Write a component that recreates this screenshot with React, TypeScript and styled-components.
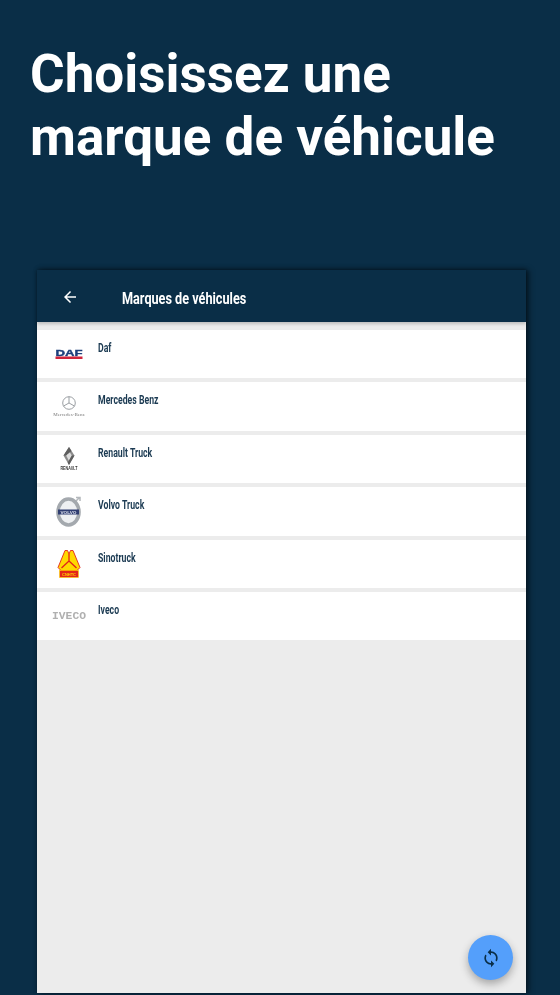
import React from "react"
import styled, { createGlobalStyle } from "styled-components"

const GlobalStyle = createGlobalStyle`
html, body { margin: 0; padding: 0; background: #0a2e47; }
* { box-sizing: border-box; }
`

const Page = styled.div`
width: 560px;
height: 995px;
overflow: hidden;
background: #0a2e47;
padding: 43px 0 2px 37px;
display: flex;
flex-direction: column;
`

const Title = styled.h1`
margin: 0 0 101px -7px;
font-family: Roboto, "Liberation Sans", sans-serif;
font-weight: 700;
font-size: 53px;
line-height: 63px;
color: #ffffff;
`

const Frame = styled.div`
position: relative;
width: 489px;
flex: 1;
display: flex;
flex-direction: column;
background: #ececec;
box-shadow: 3px 0 6px rgba(0, 0, 0, 0.45), 0 -1px 4px rgba(0, 0, 0, 0.3);
`

const Toolbar = styled.div`
height: 52px;
flex-shrink: 0;
display: flex;
align-items: center;
background: #0a2e47;
box-shadow: 0 2px 3px rgba(0, 0, 0, 0.2);
padding-left: 24px;
`

const BackButton = styled.div`
width: 18px;
height: 18px;
margin-right: 43px;
margin-top: 1px;
display: flex;
color: #ffffff;
`

// the app uses a condensed face, none is installed so Roboto gets squeezed
const ToolbarTitle = styled.div`
font-family: Roboto, sans-serif;
font-weight: 700;
font-size: 17px;
color: #ffffff;
margin-top: 3px;
white-space: nowrap;
transform: scaleX(0.745);
transform-origin: left center;
`

const List = styled.div`
display: flex;
flex-direction: column;
gap: 4px;
padding-top: 8px;
`

const Row = styled.div`
height: 48.4px;
background: #ffffff;
display: flex;
`

const LogoSlot = styled.div`
width: 61px;
flex-shrink: 0;
display: flex;
align-items: center;
justify-content: center;
padding-left: 3px;
filter: blur(0.35px);
`

const Name = styled.div`
font-family: Roboto, sans-serif;
font-weight: 700;
font-size: 13px;
color: #1b3a52;
padding-top: 10px;
white-space: nowrap;
transform: scaleX(0.67);
transform-origin: left center;
`

const Fab = styled.div`
position: absolute;
right: 13px;
bottom: 13px;
width: 45px;
height: 45px;
border-radius: 50%;
background: #549ffb;
color: #0a2e47;
display: flex;
align-items: center;
justify-content: center;
box-shadow: 0 4px 8px rgba(0, 0, 0, 0.3);
`

const DafLogo = () => (
  <svg width="32" height="16" viewBox="0 0 32 16">
    <text x="16" y="9.500" textAnchor="middle" fontFamily="Liberation Sans" fontWeight="700" fontSize="9.500" fill="#1c3f7c" stroke="#1c3f7c" strokeWidth="0.400" textLength="27" lengthAdjust="spacingAndGlyphs">DAF</text>
    <rect x="2.500" y="10.500" width="27" height="2.500" fill="#d0243c" />
  </svg>
)

const MercedesLogo = () => (
  <svg width="44" height="32" viewBox="-6 0 44 32">
    <g stroke="#8f9498" fill="none" strokeWidth="0.900">
      <circle cx="16" cy="12" r="6.300" />
      <path d="M16 5.700V12L10.600 15M16 12l5.400 3" />
    </g>
    <text x="16" y="25" textAnchor="middle" fontFamily="Liberation Serif" fontSize="5" fill="#777">Mercedes-Benz</text>
  </svg>
)

const RenaultLogo = () => (
  <svg width="26" height="30" viewBox="-3 -3 26 30">
    <path d="M10 0l5.500 8.500L10 18 4.500 8.500z" fill="#8b8b8b" />
    <path d="M10 4l2.800 4.500L10 14 7.200 8.500z" fill="#dcdcdc" />
    <path d="M10 0l2.500 4L7 8.500H4.500zM12.800 8.500h2.700L10 18l-1.300-2.300z" fill="#5e5e5e" />
    <text x="10" y="23" textAnchor="middle" fontFamily="Liberation Sans" fontWeight="700" fontSize="4.600" fill="#333" textLength="17" lengthAdjust="spacingAndGlyphs">RENAULT</text>
  </svg>
)

const VolvoLogo = () => (
  <svg width="26" height="31" viewBox="0 0 26 31">
    <path d="M19 6l4-4M20 1.500h4V5" stroke="#b4b8bc" strokeWidth="1.500" fill="none" />
    <ellipse cx="12.500" cy="16" rx="10.500" ry="13" fill="#eef0f2" stroke="#a4a9ae" strokeWidth="3.600" />
    <rect x="2" y="13.500" width="21" height="5" fill="#2f3d70" />
    <text x="12.500" y="17.600" textAnchor="middle" fontFamily="Liberation Sans" fontWeight="700" fontSize="4.200" fill="#dfe3ee" textLength="16" lengthAdjust="spacingAndGlyphs">VOLVO</text>
  </svg>
)

const SinotruckLogo = () => (
  <svg width="24" height="30" viewBox="0 0 24 30">
    <path d="M8 1.500h2.500L12 5l1.500-3.500H16l7 17-3.500 3.500h-15L1 18.500z" fill="#ffd800" stroke="#e2231a" strokeWidth="0.900" />
    <path d="M12 5v7M12 12L4.500 19M12 12l7.500 7" stroke="#e2231a" strokeWidth="1.300" fill="none" />
    <rect x="2.500" y="21.500" width="19" height="7" fill="#e3261a" stroke="#ffd800" strokeWidth="0.600" />
    <text x="12" y="27" textAnchor="middle" fontFamily="Liberation Sans" fontWeight="700" fontSize="4.200" fill="#ffd800" textLength="14" lengthAdjust="spacingAndGlyphs">CNHTC</text>
  </svg>
)

const IvecoLogo = () => (
  <svg width="36" height="14" viewBox="0 0 36 14">
    <text x="18" y="10" textAnchor="middle" fontFamily="Liberation Mono" fontWeight="700" fontSize="10" fill="#b0b0b0" textLength="34" lengthAdjust="spacingAndGlyphs">IVECO</text>
  </svg>
)

const brands = [
  { name: "Daf", logo: <DafLogo /> },
  { name: "Mercedes Benz", logo: <MercedesLogo /> },
  { name: "Renault Truck", logo: <RenaultLogo /> },
  { name: "Volvo Truck", logo: <VolvoLogo /> },
  { name: "Sinotruck", logo: <SinotruckLogo /> },
  { name: "Iveco", logo: <IvecoLogo /> },
]

const App = () => {
  return (
    <Page>
      <GlobalStyle />
      <Title>Choisissez une<br />marque de véhicule</Title>
      <Frame>
        <Toolbar>
          <BackButton>
            <svg width="18" height="18" viewBox="0 0 24 24" fill="currentColor">
              <path d="M20 11H7.830l5.590-5.590L12 4l-8 8 8 8 1.410-1.410L7.830 13H20v-2z" />
            </svg>
          </BackButton>
          <ToolbarTitle>Marques de véhicules</ToolbarTitle>
        </Toolbar>
        <List>
          {brands.map((b) => (
            <Row key={b.name}>
              <LogoSlot>{b.logo}</LogoSlot>
              <Name>{b.name}</Name>
            </Row>
          ))}
        </List>
        <Fab>
          <svg width="20" height="20" viewBox="0 0 24 24" fill="currentColor">
            <path d="M12 4V1L8 5l4 4V6c3.310 0 6 2.690 6 6 0 1.010-.25 1.970-.7 2.800l1.460 1.460C19.540 15.030 20 13.570 20 12c0-4.420-3.580-8-8-8zm0 14c-3.310 0-6-2.690-6-6 0-1.010.25-1.970.7-2.800L5.240 7.740C4.460 8.970 4 10.430 4 12c0 4.420 3.580 8 8 8v3l4-4-4-4v3z" />
          </svg>
        </Fab>
      </Frame>
    </Page>
  )
}

export default App
